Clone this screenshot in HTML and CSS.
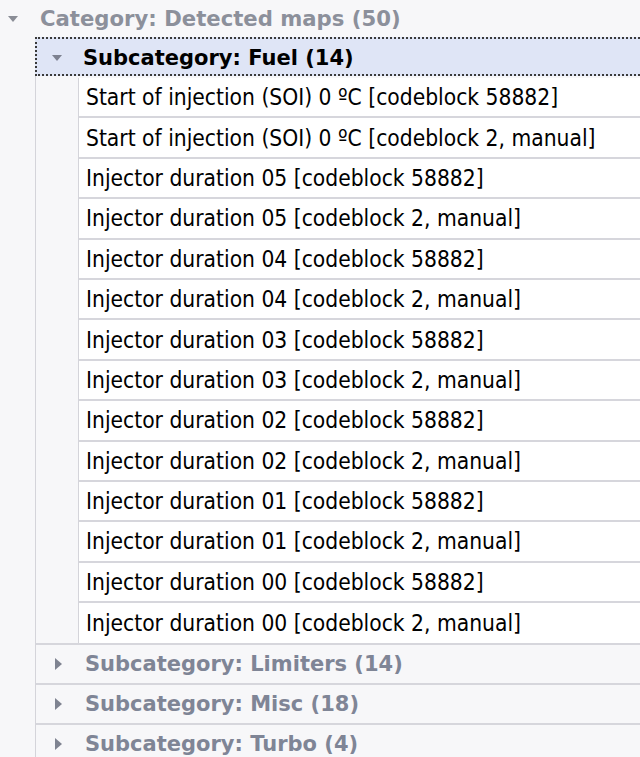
FILE: index.html
```html
<!DOCTYPE html>
<html>
<head>
<meta charset="utf-8">
<link rel="stylesheet" href="styles.css">
</head>
<body>
<div class="tree">
  <div class="cat-row">
    <span class="arrow-down cat-arrow"></span>
    <span class="cat-label">Category: Detected maps (50)</span>
  </div>
  <div class="group">
    <div class="sub-row focused">
      <span class="arrow-down sub-arrow"></span>
      <span class="sub-label open">Subcategory: Fuel (14)</span>
    </div>
    <div class="items">
      <div class="item">Start of injection (SOI) 0 ºC [codeblock 58882]</div>
      <div class="item">Start of injection (SOI) 0 ºC [codeblock 2, manual]</div>
      <div class="item">Injector duration 05 [codeblock 58882]</div>
      <div class="item">Injector duration 05 [codeblock 2, manual]</div>
      <div class="item">Injector duration 04 [codeblock 58882]</div>
      <div class="item">Injector duration 04 [codeblock 2, manual]</div>
      <div class="item">Injector duration 03 [codeblock 58882]</div>
      <div class="item">Injector duration 03 [codeblock 2, manual]</div>
      <div class="item">Injector duration 02 [codeblock 58882]</div>
      <div class="item">Injector duration 02 [codeblock 2, manual]</div>
      <div class="item">Injector duration 01 [codeblock 58882]</div>
      <div class="item">Injector duration 01 [codeblock 2, manual]</div>
      <div class="item">Injector duration 00 [codeblock 58882]</div>
      <div class="item">Injector duration 00 [codeblock 2, manual]</div>
    </div>
    <div class="sub-row closed">
      <span class="arrow-right sub-arrow"></span>
      <span class="sub-label">Subcategory: Limiters (14)</span>
    </div>
    <div class="sub-row closed">
      <span class="arrow-right sub-arrow"></span>
      <span class="sub-label">Subcategory: Misc (18)</span>
    </div>
    <div class="sub-row closed">
      <span class="arrow-right sub-arrow"></span>
      <span class="sub-label">Subcategory: Turbo (4)</span>
    </div>
  </div>
</div>
</body>
</html>
```
FILE: styles.css
```css
html, body {
  margin: 0;
  padding: 0;
  background: #f7f7f9;
}
.tree {
  width: 640px;
  height: 757px;
  overflow: hidden;
  font-family: "DejaVu Sans Condensed", "DejaVu Sans", sans-serif;
  font-size: 22.6px;
  color: #000;
}
.cat-row {
  height: 37px;
  display: flex;
  align-items: center;
}
.cat-arrow {
  margin-left: 8px;
  margin-right: 22px;
}
.cat-label {
  font-family: "DejaVu Sans", sans-serif;
  font-size: 21.2px;
  font-weight: bold;
  color: #8c909b;
}
.arrow-down {
  width: 0;
  height: 0;
  border-left: 5.5px solid transparent;
  border-right: 5.5px solid transparent;
  border-top: 6px solid #8a8d96;
}
.arrow-right {
  width: 0;
  height: 0;
  border-top: 6px solid transparent;
  border-bottom: 6px solid transparent;
  border-left: 7px solid #7f8391;
}
.group {
  margin-left: 35px;
  border-left: 1px solid #d4d4da;
}
.sub-row {
  height: 40px;
  display: flex;
  align-items: center;
  box-sizing: border-box;
}
.sub-row.focused {
  height: 39px;
  margin-left: -1px;
  background: #dfe5f6;
  border: 2px dotted #3a3a3a;
  border-right: none;
  padding-top: 2px;
}
.sub-row.focused .sub-arrow {
  margin-left: 15px;
  margin-right: 21px;
  border-top-color: #7d8190;
}
.sub-row.closed {
  border-top: 2px solid #d6d6dc;
}
.sub-row.closed .sub-arrow {
  margin-left: 19px;
  margin-right: 23px;
}
.sub-label {
  font-family: "DejaVu Sans", sans-serif;
  font-size: 21px;
  font-weight: bold;
  color: #7f8596;
}
.sub-label.open {
  color: #000;
}
.items {
  margin-left: 42px;
  margin-top: 2px;
  border-left: 1px solid #d4d4da;
  background: #fff;
}
.item {
  height: 40.4px;
  box-sizing: border-box;
  border-bottom: 2px solid #d6d6dc;
  padding-left: 7px;
  display: flex;
  align-items: center;
  white-space: nowrap;
}
.item:last-child {
  border-bottom: none;
}
```
